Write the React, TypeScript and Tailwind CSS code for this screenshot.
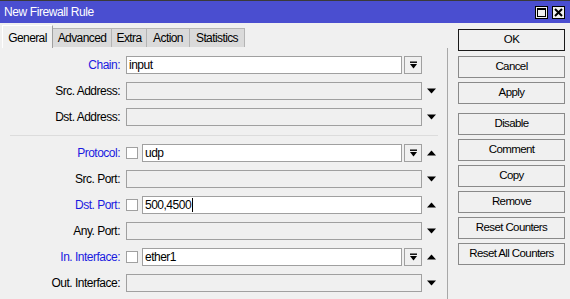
import React from 'react';

const FONT = "font-['Liberation_Sans',Arial,sans-serif] text-[11px] tracking-[-0.5px]";

type Row = {
  label: string;
  blue?: boolean;
  check?: boolean;
  value?: string;
  drop?: boolean;
  arrow?: 'up' | 'down' | null;
  cursor?: boolean;
};

const DropIcon = () => (
  <svg width="9" height="9" viewBox="0 0 9 9">
    <rect x="1" y="0.5" width="7" height="1.4" fill="#000" />
    <polygon points="1,3 8,3 4.5,7.5" fill="#000" />
  </svg>
);

const Arrow = ({ dir }: { dir: 'up' | 'down' }) => (
  <svg width="9" height="6" viewBox="0 0 9 6">
    {dir === 'down' ? (
      <polygon points="0,0.5 9,0.5 4.5,5.5" fill="#000" />
    ) : (
      <polygon points="0,5.5 9,5.5 4.5,0.5" fill="#000" />
    )}
  </svg>
);

const Field = ({ row }: { row: Row }) => {
  const enabled = row.value !== undefined;
  // control area spans 126..421
  let w = 296;
  if (row.check) w -= 16;
  if (row.drop) w -= 20;
  return (
    <div className="flex items-center">
      {row.check && <div className="w-[12px] h-[12px] border border-[#a0a0a0] bg-white mr-[4px]" />}
      <div
        className={`h-[18px] border border-[#a0a0a0] flex items-center pl-[2px] text-[12px] tracking-[-0.5px] ${enabled ? 'bg-white' : 'bg-[#f0f0f0]'}`}
        style={{ width: w }}
      >
        <span className="whitespace-nowrap">{row.value}</span>
        {row.cursor && <span className="w-px h-[14px] bg-black ml-[1px]" />}
      </div>
      {row.drop && (
        <div className="ml-[2px] w-[18px] h-[18px] border border-[#a0a0a0] bg-[#f0f0f0] flex items-center justify-center">
          <DropIcon />
        </div>
      )}
      <div className="w-[9px] ml-[5px] flex items-center justify-center">{row.arrow && <Arrow dir={row.arrow} />}</div>
    </div>
  );
};

const FormRow = ({ row }: { row: Row }) => (
  <div className="flex items-center h-[18px]">
    <div
      className={`w-[120px] shrink-0 text-right whitespace-nowrap text-[12px] tracking-[-0.5px] ${
        row.blue ? 'text-[#1a1ae0]' : 'text-black'
      }`}
    >
      {row.label}
    </div>
    <div className="ml-[6px]">
      <Field row={row} />
    </div>
  </div>
);

const topRows: Row[] = [
  { label: 'Chain:', blue: true, value: 'input', drop: true, arrow: null },
  { label: 'Src. Address:', arrow: 'down' },
  { label: 'Dst. Address:', arrow: 'down' },
];

const bottomRows: Row[] = [
  { label: 'Protocol:', blue: true, check: true, value: 'udp', drop: true, arrow: 'up' },
  { label: 'Src. Port:', arrow: 'down' },
  { label: 'Dst. Port:', blue: true, check: true, value: '500,4500', cursor: true, arrow: 'up' },
  { label: 'Any. Port:', arrow: 'down' },
  { label: 'In. Interface:', blue: true, check: true, value: 'ether1', drop: true, arrow: 'up' },
  { label: 'Out. Interface:', arrow: 'down' },
];

const tabs = [
  { label: 'Advanced', w: 'w-[59px]' },
  { label: 'Extra', w: 'w-[35px]' },
  { label: 'Action', w: 'w-[43px]' },
  { label: 'Statistics', w: 'w-[55px]' },
];

const Btn = ({ label, primary }: { label: string; primary?: boolean }) => (
  <button
    className={`h-[22px] w-[107px] bg-[#f0f0f0] border flex items-center justify-center text-black text-[11.5px] tracking-[-0.6px] ${
      primary ? 'border-[#1a1a1a]' : 'border-[#8a8a8a]'
    }`}
  >
    {label}
  </button>
);

export default function App() {
  return (
    <div className={`w-[570px] h-[299px] bg-[#f0f0f0] overflow-hidden text-black ${FONT}`}>
      {/* Title bar */}
      <div className="h-[23px] bg-[#4a4ed0] border-t border-[#3a3a3a] flex items-center justify-between pl-[4px] pr-[5px]">
        <span className="text-white text-[12px] tracking-[-0.4px]">New Firewall Rule</span>
        <div className="flex gap-[4px]">
          <div className="w-[13px] h-[13px] bg-[#f0f0f0] border border-black flex items-center justify-center">
            <div className="w-[9px] h-[9px] border border-black border-t-2" />
          </div>
          <div className="w-[13px] h-[13px] bg-[#f0f0f0] border border-black flex items-center justify-center">
            <svg width="9" height="9" viewBox="0 0 9 9">
              <path d="M1 1L8 8M8 1L1 8" stroke="#000" strokeWidth="2" />
            </svg>
          </div>
        </div>
      </div>

      <div className="flex">
        {/* Left: tabs and panel */}
        <div className="w-[448px] shrink-0 flex flex-col">
          <div className="h-[25px] flex items-end pl-[2px] text-[12px] tracking-[-0.6px]">
            <div className="h-[23px] w-[51px] bg-[#f0f0f0] border-t border-l border-r border-t-white border-l-white border-r-[#a0a0a0] flex items-start justify-center pt-[3px]">
              General
            </div>
            {tabs.map((t) => (
              <div
                key={t.label}
                className={`${t.w} h-[19px] mb-[1px] bg-[#dadada] border-t border-r border-[#b4b4b4] flex items-center justify-center`}
              >
                {t.label}
              </div>
            ))}
          </div>
          <div className="h-[251px] border-r border-[#a8a8a8] pt-[8px] flex flex-col">
            <div className="flex flex-col gap-[8px]">
              {topRows.map((r) => (
                <FormRow key={r.label} row={r} />
              ))}
            </div>
            <div className="mt-[9px] mb-[8px] ml-[10px] w-[428px] h-px bg-[#dcdcdc]" />
            <div className="flex flex-col gap-[8px]">
              {bottomRows.map((r) => (
                <FormRow key={r.label} row={r} />
              ))}
            </div>
          </div>
        </div>

        {/* Right: buttons */}
        <div className="ml-[10px] pt-[6px] flex flex-col">
          <Btn label="OK" primary />
          <div className="mt-[5px] flex flex-col gap-[4px]">
            <Btn label="Cancel" />
            <Btn label="Apply" />
          </div>
          <div className="mt-[9px] flex flex-col gap-[4px]">
            <Btn label="Disable" />
            <Btn label="Comment" />
            <Btn label="Copy" />
            <Btn label="Remove" />
            <Btn label="Reset Counters" />
            <Btn label="Reset All Counters" />
          </div>
        </div>
      </div>
    </div>
  );
}
